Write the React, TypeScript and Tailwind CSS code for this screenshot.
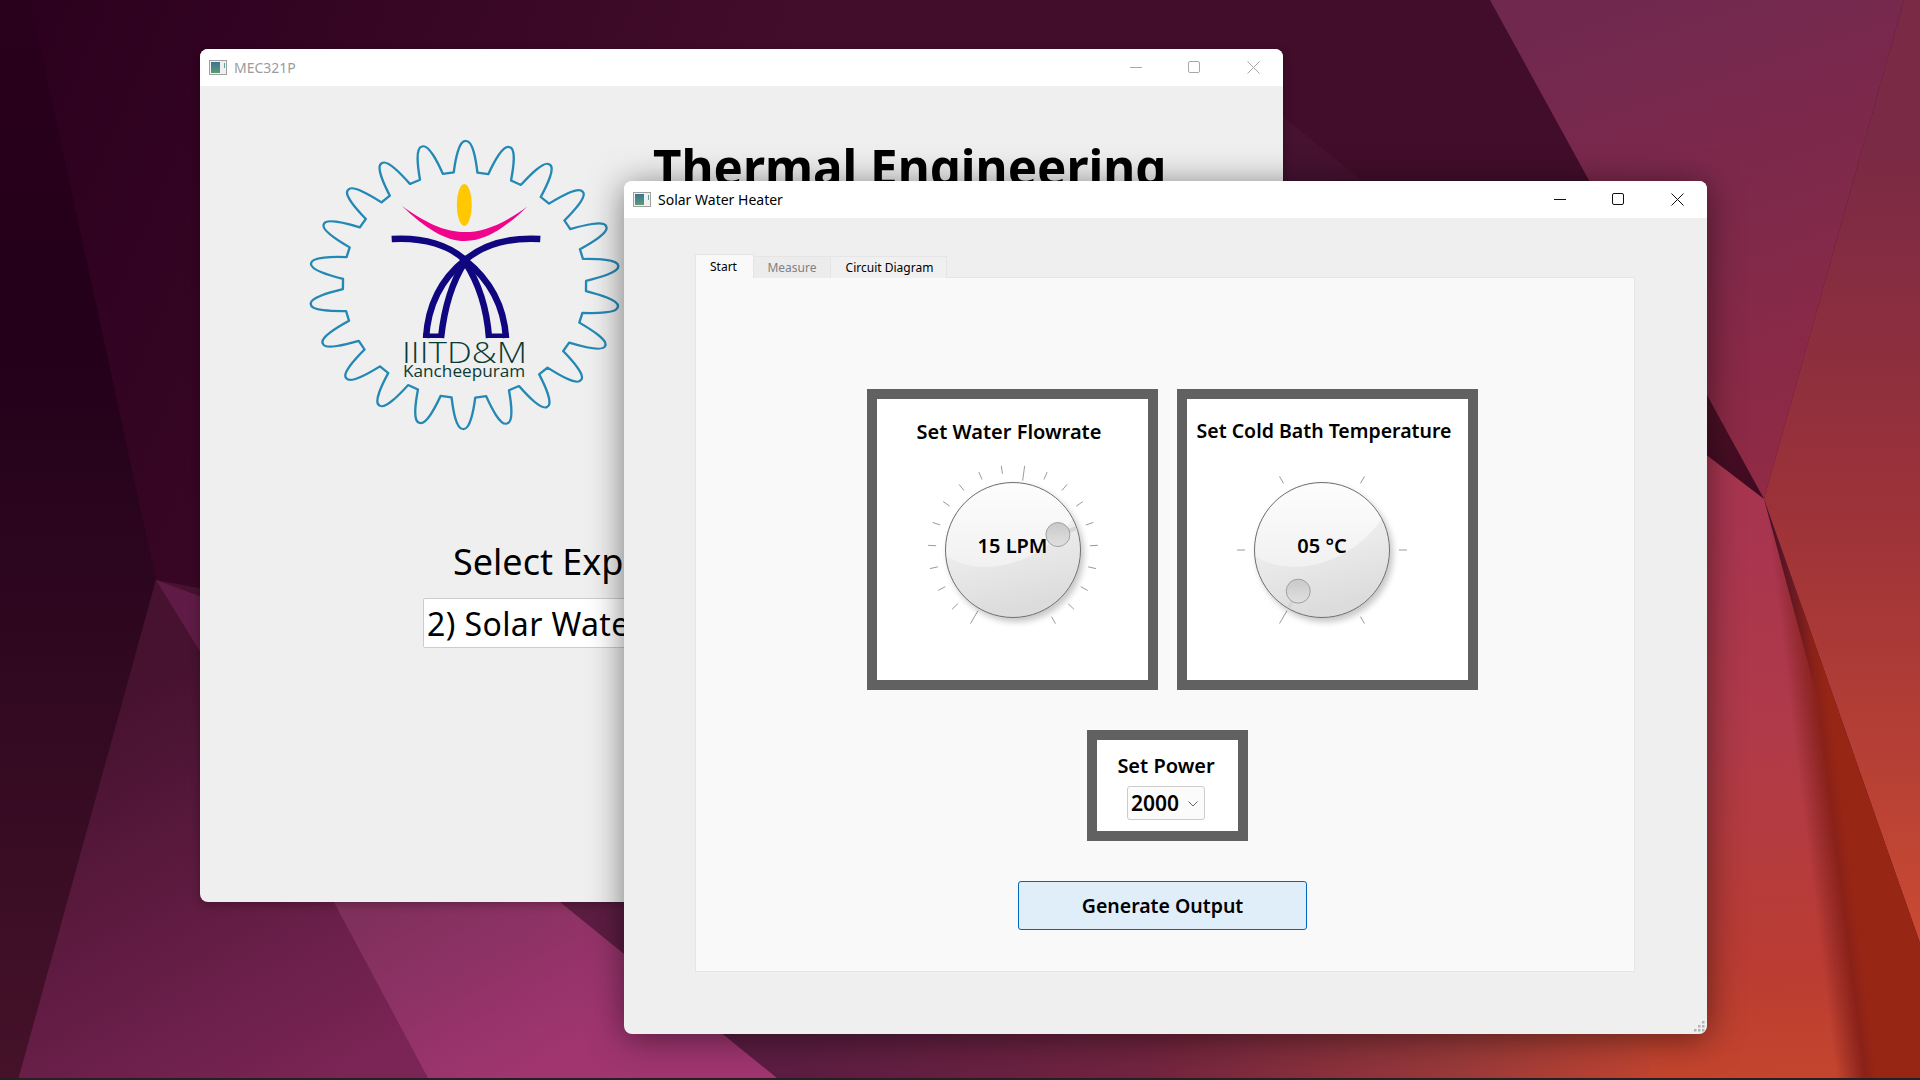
import type { ReactNode } from 'react';

// tick marks are [angle from top, inner radius]
const flowTicks = Array.from({ length: 20 }, (_, i) => ({
  angle: -150 + (i * 300) / 19,
  inner: i % 10 === 0 ? 70 : 77,
}));
const tempTicks = [-150, -90, -30, 30, 90, 150].map((angle, i) => ({ angle, inner: i === 0 ? 70 : 77 }));

const polar = (cx: number, cy: number, r: number, deg: number) => {
  const a = (deg * Math.PI) / 180;
  return `${(cx + r * Math.sin(a)).toFixed(1)} ${(cy - r * Math.cos(a)).toFixed(1)}`;
};

// 22 tooth gear outline for the logo
const gearPath = () => {
  const cx = 464.5;
  const cy = 285;
  const root = 113;
  const tip = 144;
  let d = '';
  for (let i = 0; i < 22; i++) {
    const t = (i * 360) / 22 + 0.5;
    d += `${i === 0 ? 'M' : 'L'}${polar(cx, cy, root, t - 5.6)}`;
    d += `C${polar(cx, cy, root + 12, t - 4.4)} ${polar(cx, cy, tip + 1, t - 2.6)} ${polar(cx, cy, tip, t)}`;
    d += `C${polar(cx, cy, tip + 1, t + 2.6)} ${polar(cx, cy, root + 12, t + 4.4)} ${polar(cx, cy, root, t + 5.6)}`;
  }
  return d + 'Z';
};

function Wallpaper() {
  return (
    <svg className="absolute inset-0" width="1920" height="1080" viewBox="0 0 1920 1080">
      <defs>
        <linearGradient id="top" gradientUnits="userSpaceOnUse" x1="0" y1="0" x2="700" y2="300">
          <stop offset="0" stopColor="#2a001d" />
          <stop offset="0.3" stopColor="#320322" />
          <stop offset="1" stopColor="#420d2a" />
        </linearGradient>
        <linearGradient id="leftWedge" gradientUnits="userSpaceOnUse" x1="0" y1="0" x2="0" y2="1080">
          <stop offset="0" stopColor="#2a001d" />
          <stop offset="0.32" stopColor="#24001a" />
          <stop offset="0.6" stopColor="#2f0820" />
          <stop offset="1" stopColor="#451229" />
        </linearGradient>
        <linearGradient id="bottomLeft" gradientUnits="userSpaceOnUse" x1="120" y1="700" x2="330" y2="1080">
          <stop offset="0" stopColor="#46122f" />
          <stop offset="1" stopColor="#7a2555" />
        </linearGradient>
        <linearGradient id="band" gradientUnits="userSpaceOnUse" x1="400" y1="900" x2="500" y2="1080">
          <stop offset="0" stopColor="#80305c" />
          <stop offset="1" stopColor="#a03570" />
        </linearGradient>
        <linearGradient id="bottomRight" gradientUnits="userSpaceOnUse" x1="800" y1="1000" x2="1680" y2="1080">
          <stop offset="0" stopColor="#5c1d42" />
          <stop offset="0.4" stopColor="#72243f" />
          <stop offset="0.75" stopColor="#9a3a3a" />
          <stop offset="1" stopColor="#c5452f" />
        </linearGradient>
        <linearGradient id="mauve" gradientUnits="userSpaceOnUse" x1="1600" y1="0" x2="1760" y2="480">
          <stop offset="0" stopColor="#70284f" />
          <stop offset="1" stopColor="#902a45" />
        </linearGradient>
        <linearGradient id="rightPanel" gradientUnits="userSpaceOnUse" x1="1880" y1="150" x2="1880" y2="940">
          <stop offset="0" stopColor="#7a2a45" />
          <stop offset="0.45" stopColor="#9c3239" />
          <stop offset="1" stopColor="#c94a32" />
        </linearGradient>
        <linearGradient id="belowPoint" gradientUnits="userSpaceOnUse" x1="1740" y1="520" x2="1760" y2="1080">
          <stop offset="0" stopColor="#a83550" />
          <stop offset="0.4" stopColor="#b03a48" />
          <stop offset="0.8" stopColor="#ba3c32" />
          <stop offset="1" stopColor="#c4452d" />
        </linearGradient>
        <linearGradient id="darkBand" gradientUnits="userSpaceOnUse" x1="1802" y1="800" x2="1842" y2="795">
          <stop offset="0" stopColor="#7e2020" stopOpacity="0" />
          <stop offset="0.7" stopColor="#8a2118" />
          <stop offset="1" stopColor="#982615" />
        </linearGradient>
        <linearGradient id="darkTip" gradientUnits="userSpaceOnUse" x1="1707" y1="420" x2="1764" y2="499">
          <stop offset="0" stopColor="#4c0f26" />
          <stop offset="1" stopColor="#3e0a20" />
        </linearGradient>
      </defs>
      <rect width="1920" height="1080" fill="url(#top)" />
      <polygon points="1280,114 1361,180 1280,181" fill="#451230" />
      <polygon points="0,0 30,0 156,580 18,1080 0,1080" fill="url(#leftWedge)" />
      <polygon points="156,580 18,1080 800,1080 800,700" fill="url(#bottomLeft)" />
      <polygon points="156,580 210,600 210,668" fill="#5f1b46" />
      <polygon points="226,700 428,1078 777,1078 410,780" fill="url(#band)" />
      <polygon points="560,902 777,1078 1710,1078 1710,880 560,880" fill="url(#bottomRight)" />
      <polygon points="1490,0 1904,0 1764,499" fill="url(#mauve)" />
      <polygon points="1904,0 1920,0 1920,943 1764,499" fill="url(#rightPanel)" />
      <polygon points="1700,390 1764,499 1920,1080 1650,1080 1650,390" fill="url(#belowPoint)" />
      <polygon points="1764,499 1920,943 1920,1080 1790,1080" fill="url(#darkBand)" />
      <polygon points="1700,384 1764,499 1700,450" fill="url(#darkTip)" />
      <rect y="1078" width="1920" height="2" fill="#222222" />
    </svg>
  );
}

function AppIcon() {
  return (
    <svg width="18" height="15" viewBox="0 0 18 15" className="shrink-0">
      <defs>
        <linearGradient id="appIcon" x1="0" y1="0" x2="0" y2="1">
          <stop offset="0" stopColor="#3a7490" />
          <stop offset="1" stopColor="#5a9c78" />
        </linearGradient>
      </defs>
      <rect x="0.5" y="0.5" width="17" height="14" fill="#f0f0f0" stroke="#a0a0a0" />
      <rect x="2" y="2" width="9" height="11" fill="url(#appIcon)" />
      <rect x="15" y="3" width="1" height="5" fill="#5aa59c" />
    </svg>
  );
}

function WindowControls({ inactive }: { inactive?: boolean }) {
  const color = inactive ? '#a8a8a8' : '#111111';
  return (
    <div className="flex">
      <div className="flex h-[37px] w-[59px] items-center justify-center">
        <svg width="12" height="12" viewBox="0 0 12 12">
          <path d="M0 5.5H12" stroke={color} strokeWidth="1" />
        </svg>
      </div>
      <div className="flex h-[37px] w-[59px] items-center justify-center pr-[2px] pb-[1px]">
        <svg width="12" height="12" viewBox="0 0 12 12">
          <rect x="0.5" y="0.5" width="11" height="11" rx="1.5" fill="none" stroke={color} strokeWidth="1" />
        </svg>
      </div>
      <div className="flex h-[37px] w-[59px] items-center justify-center pb-[1px]">
        <svg width="13" height="13" viewBox="0 0 13 13">
          <path d="M0.5 0.5L12.5 12.5M12.5 0.5L0.5 12.5" stroke={color} strokeWidth="1" />
        </svg>
      </div>
    </div>
  );
}

function TitleBar({ title, inactive }: { title: string; inactive?: boolean }) {
  return (
    <div className="flex h-[37px] items-center justify-between rounded-t-lg bg-white pl-[9px]">
      <div className="flex items-center gap-[7px]">
        <AppIcon />
        <span className={`text-[14px] ${inactive ? 'text-[#9c9c9c]' : 'text-black'}`}>{title}</span>
      </div>
      <WindowControls inactive={inactive} />
    </div>
  );
}

function Logo() {
  return (
    <svg width="324" height="300" viewBox="303 138 324 300" className="shrink-0">
      <path
        d={gearPath()}
        transform="translate(464.5 0) scale(1.077 1) translate(-464.5 0)"
        fill="none"
        stroke="#2488b4"
        strokeWidth="2.2"
        strokeLinejoin="round"
      />
      <ellipse cx="464.3" cy="205" rx="7.5" ry="21" fill="#ffc800" />
      <path
        d="M401.7 205.7C430 226 448 232 465 232C482 232 500 226 527.3 206.7C505 228 485 241 465 241C445 241 425 228 401.7 205.7Z"
        fill="#f0048c"
      />
      <g fill="none" stroke="#10067f" strokeWidth="6.5">
        <path d="M391.7 239C425 237 450 246 465 260C490 280 504 305 506 338" />
        <path d="M540.3 239C507 237 482 246 465 260C440 280 428 305 426 338" />
        <path d="M465 262C480 285 487 310 489 338" />
        <path d="M465 262C450 285 444 310 441 338" />
      </g>
      <rect x="423" y="333.5" width="21" height="4.5" fill="#10067f" />
      <rect x="486" y="333.5" width="23" height="4.5" fill="#10067f" />
      <text
        x="402"
        y="363"
        fontSize="29.5"
        fill="#0a3b33"
        fontFamily="'Open Sans', sans-serif"
        fontWeight="300"
        textLength="125"
        lengthAdjust="spacingAndGlyphs"
      >
        IIITD&amp;M
      </text>
      <text x="403" y="376.5" fontSize="17.2" fill="#0a3b33" fontFamily="'Open Sans', sans-serif">
        Kancheepuram
      </text>
    </svg>
  );
}

function Dial({ ticks, value, label }: { ticks: { angle: number; inner: number }[]; value: number; label: string }) {
  const c = 90;
  const id = label.startsWith('15') ? 'flow' : 'temp';
  return (
    <div className="relative h-[180px] w-[180px]">
      <svg width="180" height="180" viewBox="0 0 180 180">
        <defs>
          <linearGradient id={`${id}Body`} x1="0" y1="0" x2="0.25" y2="1">
            <stop offset="0" stopColor="#fafafa" />
            <stop offset="0.5" stopColor="#ededed" />
            <stop offset="1" stopColor="#dcdcdc" />
          </linearGradient>
          <linearGradient id={`${id}Gloss`} x1="0" y1="0" x2="0" y2="1">
            <stop offset="0" stopColor="#fdfdfd" />
            <stop offset="1" stopColor="#f1f1f1" />
          </linearGradient>
          <linearGradient id={`${id}Handle`} x1="0" y1="0" x2="0" y2="1">
            <stop offset="0" stopColor="#c9c9c9" />
            <stop offset="1" stopColor="#e0e0e0" />
          </linearGradient>
          <filter id={`${id}Shadow`} x="-20%" y="-20%" width="140%" height="140%">
            <feGaussianBlur stdDeviation="3" />
          </filter>
        </defs>
        {ticks.map((t) => {
          const a = (t.angle * Math.PI) / 180;
          return (
            <line
              key={t.angle}
              x1={c + t.inner * Math.sin(a)}
              y1={c - t.inner * Math.cos(a)}
              x2={c + 85 * Math.sin(a)}
              y2={c - 85 * Math.cos(a)}
              stroke="#9a9a9a"
              strokeWidth="1"
            />
          );
        })}
        <circle cx={c + 3} cy={c + 4} r="68" fill="#000000" opacity="0.22" filter={`url(#${id}Shadow)`} />
        <circle cx={c} cy={c} r="68" fill={`url(#${id}Body)`} />
        <path
          d={`M${c - 67} ${c + 6}A68 68 0 0 1 ${c + 60} ${c - 32}C${c + 35} ${c + 8} ${c - 25} ${c + 32} ${c - 67} ${c + 6}Z`}
          fill={`url(#${id}Gloss)`}
        />
        <circle cx={c} cy={c} r="67.5" fill="none" stroke="#6f6f6f" strokeWidth="1" />
        <path
          d={`M${polar(c, c, 58, value)}L${polar(c, c, 67, value)}`}
          stroke="#d6d6d6"
          strokeWidth="4"
          fill="none"
        />
        <circle
          cx={c + 47.5 * Math.sin((value * Math.PI) / 180)}
          cy={c - 47.5 * Math.cos((value * Math.PI) / 180)}
          r="12"
          fill={`url(#${id}Handle)`}
          stroke="#a0a0a0"
          strokeWidth="1"
        />
      </svg>
      <div className="absolute inset-x-0 top-[71px] text-center text-[20px] leading-[30px] font-semibold">{label}</div>
    </div>
  );
}

function GroupBox({ children, className }: { children: ReactNode; className: string }) {
  return <div className={`flex flex-col items-center border-[10px] border-[#616161] bg-white ${className}`}>{children}</div>;
}

export default function App() {
  return (
    <div className="relative h-[1080px] w-[1920px] overflow-hidden font-['Noto_Sans',sans-serif] text-black">
      <Wallpaper />

      {/* back window */}
      <div className="absolute top-[49px] left-[200px] h-[853px] w-[1083px] rounded-lg bg-[#efefef] shadow-[0_2px_10px_rgba(0,0,0,0.3)]">
        <TitleBar title="MEC321P" inactive />
        <div className="flex pt-[52px] pl-[103px]">
          <Logo />
          <h1 className="pl-[26px] text-[49.3px] leading-[58px] font-bold whitespace-nowrap">Thermal Engineering</h1>
        </div>
        <div className="pt-[99px] pl-[253px] text-[36px] leading-[50px]">Select Experiment</div>
        <div className="mt-[11px] ml-[223px] h-[50px] w-[600px] rounded-[2px] border border-[#cccccc] bg-white pt-[3px] pl-[3px] text-[32px] leading-[44px] tracking-[0.4px]">
          2) Solar Water Heater
        </div>
      </div>

      {/* front window */}
      <div className="absolute top-[181px] left-[624px] h-[853px] w-[1083px] rounded-lg bg-[#efefef] shadow-[0_4px_34px_rgba(0,0,0,0.5)]">
        <TitleBar title="Solar Water Heater" />
        <div className="pt-[36px] pl-[71px]">
          <div className="relative z-10 flex h-[24px] items-end text-[12px]">
            <div className="flex h-[24px] w-[59px] justify-center border border-b-0 border-[#e5e5e5] bg-[#f9f9f9] pt-[3px] pr-[2px]">Start</div>
            <div className="flex h-[22px] w-[77px] justify-center border-t border-r border-[#e5e5e5] bg-[#ececec] pt-[2px] text-[#808080]">
              Measure
            </div>
            <div className="flex h-[22px] w-[116px] justify-center border-t border-r border-[#e5e5e5] bg-[#f0f0f0] pt-[2px] pl-[2px]">
              Circuit Diagram
            </div>
          </div>
          <div className="-mt-px h-[695px] w-[940px] border border-[#e5e5e5] bg-[#f9f9f9]">
            <div className="flex gap-[19px] pt-[111px] pl-[171px]">
              <GroupBox className="h-[301px] w-[291px]">
                <div className="pt-[19px] pr-[7px] text-[20px] leading-[27px] font-semibold">Set Water Flowrate</div>
                <div className="pt-[15px]">
                  <Dial ticks={flowTicks} value={71} label="15 LPM" />
                </div>
              </GroupBox>
              <GroupBox className="h-[301px] w-[301px]">
                <div className="pt-[18px] pr-[7px] text-[19.5px] leading-[27px] font-semibold whitespace-nowrap">
                  Set Cold Bath Temperature
                </div>
                <div className="pt-[16px] pr-[11px]">
                  <Dial ticks={tempTicks} value={-150} label="05 °C" />
                </div>
              </GroupBox>
            </div>
            <div className="flex pt-[40px] pl-[391px]">
              <GroupBox className="h-[111px] w-[161px] pr-[3px]">
                <div className="pt-[12px] text-[20px] leading-[27px] font-semibold">Set Power</div>
                <div className="mt-[7px] flex h-[34px] w-[78px] items-center justify-between rounded-[3px] border border-[#cccccc] bg-[#fbfbfb] pt-[1px] pr-[6px] pl-[3px] text-[21px] font-semibold">
                  2000
                  <svg width="10" height="6" viewBox="0 0 10 6">
                    <path d="M0.5 0.5L5 5L9.5 0.5" fill="none" stroke="#666666" strokeWidth="1" />
                  </svg>
                </div>
              </GroupBox>
            </div>
            <div className="flex pt-[40px] pl-[322px]">
              <button
                type="button"
                className="flex h-[49px] w-[289px] items-center justify-center rounded-[3px] border-[1.5px] border-[#0067c0] bg-[#e0eef9] text-[19.5px] font-semibold"
              >
                Generate Output
              </button>
            </div>
          </div>
        </div>
        <svg className="absolute right-[1px] bottom-[1px]" width="13" height="13" viewBox="0 0 13 13" fill="#b4b4b4">
          <rect x="9" y="1" width="2.5" height="2.5" />
          <rect x="5" y="5" width="2.5" height="2.5" />
          <rect x="9" y="5" width="2.5" height="2.5" />
          <rect x="1" y="9" width="2.5" height="2.5" />
          <rect x="5" y="9" width="2.5" height="2.5" />
          <rect x="9" y="9" width="2.5" height="2.5" />
        </svg>
      </div>
    </div>
  );
}
